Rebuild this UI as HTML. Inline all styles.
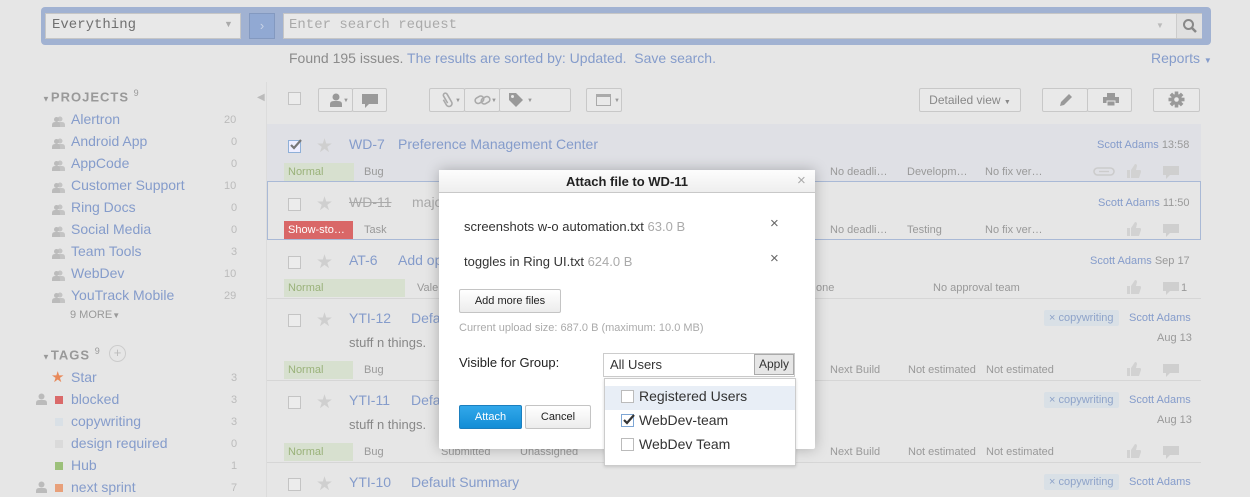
<!DOCTYPE html>
<html><head><meta charset="utf-8"><style>
*{box-sizing:border-box;margin:0;padding:0}
body{width:1250px;height:497px;overflow:hidden;background:#e6e6e6;font-family:"Liberation Sans",sans-serif;font-size:13px;color:#8a8a8a;position:relative}
.a{position:absolute;white-space:nowrap}
.lk{color:#859ccb}
.cb{position:absolute;width:13px;height:13px;border:1px solid #c4c4c4;background:#ececec}
.star{position:absolute;color:#cfcfcf;font-size:19px}
.btn{position:absolute;border:1px solid #c8c8c8;border-radius:2px;background:#e9e9e9;height:24px}
.tag{position:absolute;background:#d9e0e6;color:#8ea3c9;font-size:11px;padding:2px 5px;border-radius:2px}
.sep{position:absolute;left:267px;width:934px;height:1px;background:#d6d6d6}
</style></head><body>
<div class="a" style="left:41px;top:7px;width:1170px;height:38px;background:#a1b2d2;border-radius:4px"></div>
<div class="a" style="left:45px;top:13px;width:196px;height:26px;background:#e8e8e8;border:1px solid #c6c6c6"></div>
<div class="a" style="left:52px;top:17px;font-family:'Liberation Mono',monospace;font-size:14px;color:#707070">Everything</div>
<div class="a" style="left:224px;top:19px;color:#aaa;font-size:9px">▼</div>
<div class="a" style="left:249px;top:13px;width:26px;height:26px;background:#91a9d3;border:1px solid #8399c0;color:#c8d3e6;text-align:center;line-height:24px">›</div>
<div class="a" style="left:283px;top:13px;width:919px;height:26px;background:#e8e8e8;border:1px solid #c6c6c6"></div>
<div class="a" style="left:289px;top:17px;font-family:'Liberation Mono',monospace;font-size:14px;color:#aaa">Enter search request</div>
<div class="a" style="left:1156px;top:21px;color:#bbb;font-size:8px">▼</div>
<div class="a" style="left:1176px;top:14px;width:26px;height:24px;background:#e0e0e0;border-left:1px solid #ccc"></div>
<svg class="a" style="left:1182px;top:18px" width="16" height="16"><circle cx="6.5" cy="6.5" r="4.5" fill="none" stroke="#888" stroke-width="2"/><path d="M10 10l4 4" stroke="#888" stroke-width="2.5"/></svg>
<div class="a" style="left:289px;top:50px;font-size:14px;color:#8b8b8b">Found 195 issues. <span class="lk">The results are sorted by: Updated.&nbsp; Save search.</span></div>
<div class="a lk" style="left:1151px;top:50px;font-size:14px">Reports <span style="font-size:8px">▼</span></div>
<div class="a" style="left:42px;top:88px;font-size:13px;color:#999;letter-spacing:1px;font-weight:bold"><span style="font-size:8px">▼</span>PROJECTS <sup style="font-size:9px;font-weight:normal">9</sup></div>
<div class="a" style="left:257px;top:92px;color:#bbb;font-size:10px">◀</div>
<div class="a" style="left:266px;top:82px;width:1px;height:415px;background:#dcdcdc"></div>
<div id="proj"></div>
<div class="a" style="left:70px;top:309px;font-size:11px;color:#999">9 MORE<span style="font-size:8px">▼</span></div>
<div class="a" style="left:42px;top:346px;font-size:13px;color:#999;letter-spacing:1px;font-weight:bold"><span style="font-size:8px">▼</span>TAGS <sup style="font-size:9px;font-weight:normal">9</sup></div>
<div class="a" style="left:109px;top:345px;width:17px;height:17px;border:1px solid #ccc;border-radius:50%;color:#bbb;text-align:center;line-height:14px">+</div>
<div class="cb" style="left:288px;top:92px"></div>
<div class="btn" style="left:318px;top:88px;width:35px"></div><div class="btn" style="left:352px;top:88px;width:35px"></div>
<svg class="a" style="left:330px;top:93px" width="12" height="14"><circle cx="6" cy="4" r="3.5" fill="#999"/><path d="M0 14v-3q0-3 4-3h4q4 0 4 3v3z" fill="#999"/></svg>
<div class="a" style="left:343px;top:98px;color:#999;font-size:6px">▼</div>
<svg class="a" style="left:361px;top:93px" width="18" height="16"><path d="M1 1h16v10H8l-4 4v-4H1z" fill="#9a9a9a"/></svg>
<div class="btn" style="left:429px;top:88px;width:36px"></div><div class="btn" style="left:464px;top:88px;width:36px"></div><div class="btn" style="left:499px;top:88px;width:72px"></div>
<svg class="a" style="left:441px;top:92px" width="12" height="16"><path d="M3 6v6a3 3 0 006 0V3a2 2 0 00-4 0v8" fill="none" stroke="#aaa" stroke-width="1.6" transform="rotate(-30 6 8)"/></svg>
<div class="a" style="left:455px;top:98px;color:#999;font-size:6px">▼</div>
<svg class="a" style="left:474px;top:93px" width="18" height="14"><rect x="1" y="4" width="9" height="6" rx="3" fill="none" stroke="#aaa" stroke-width="1.6" transform="rotate(-30 5 7)"/><rect x="7" y="4" width="9" height="6" rx="3" fill="none" stroke="#aaa" stroke-width="1.6" transform="rotate(-30 12 7)"/></svg>
<div class="a" style="left:491px;top:98px;color:#999;font-size:6px">▼</div>
<svg class="a" style="left:508px;top:92px" width="16" height="16"><path d="M1 1h7l7 7-7 7-7-7z" fill="#999"/><circle cx="4.5" cy="4.5" r="1.5" fill="#e9e9e9"/></svg>
<div class="a" style="left:527px;top:98px;color:#999;font-size:6px">▼</div>
<div class="btn" style="left:586px;top:88px;width:36px"></div>
<div class="a" style="left:596px;top:94px;width:15px;height:12px;border:1px solid #aaa;border-top-width:3px"></div>
<div class="a" style="left:614px;top:98px;color:#999;font-size:6px">▼</div>
<div class="btn" style="left:919px;top:88px;width:102px;text-align:center;line-height:22px;font-size:12px;color:#888">Detailed view <span style="font-size:7px">▼</span></div>
<div class="btn" style="left:1042px;top:88px;width:46px"></div><div class="btn" style="left:1087px;top:88px;width:45px"></div>
<svg class="a" style="left:1058px;top:92px" width="16" height="16"><path d="M2 14l1-4 8-8 3 3-8 8z" fill="#999"/></svg>
<svg class="a" style="left:1103px;top:93px" width="16" height="14"><rect x="4" y="0" width="8" height="4" fill="#999"/><rect x="0" y="4" width="16" height="6" fill="#999"/><rect x="4" y="8" width="8" height="5" fill="#999" stroke="#e9e9e9" stroke-width="1"/></svg>
<div class="btn" style="left:1153px;top:88px;width:47px"></div>
<svg class="a" style="left:1168px;top:91px" width="17" height="17" viewBox="-8.5 -8.5 17 17"><g fill="#999"><circle r="5.5"/><rect x="-1.8" y="-8" width="3.6" height="16"/><rect x="-1.8" y="-8" width="3.6" height="16" transform="rotate(45)"/><rect x="-1.8" y="-8" width="3.6" height="16" transform="rotate(90)"/><rect x="-1.8" y="-8" width="3.6" height="16" transform="rotate(135)"/></g><circle r="2.3" fill="#e9e9e9"/></svg>
<div class="a" style="left:267px;top:124px;width:934px;height:58px;background:#dfe0e5"></div>
<div class="a" style="left:267px;top:181px;width:934px;height:59px;border:1px solid #a9b9d6"></div>
<div class="sep" style="top:298px"></div><div class="sep" style="top:380px"></div><div class="sep" style="top:462px"></div>
<div id="rows"></div>
<div class="a" style="left:439px;top:170px;width:376px;height:279px;background:#fff;border-radius:2px;box-shadow:0 0 14px rgba(0,0,0,.25)"></div>
<div class="a" style="left:439px;top:170px;width:376px;height:23px;background:linear-gradient(#fdfdfd,#eee);border-bottom:1px solid #c8c8c8;text-align:center;font-weight:bold;font-size:13px;color:#222;line-height:23px">Attach file to WD-11</div>
<div class="a" style="left:797px;top:172px;color:#aaa;font-size:15px">×</div>
<div class="a" style="left:464px;top:219px;font-size:13px;color:#333">screenshots w-o automation.txt <span style="color:#aaa">63.0 B</span></div>
<div class="a" style="left:770px;top:215px;color:#666;font-size:15px">×</div>
<div class="a" style="left:464px;top:254px;font-size:13px;color:#333">toggles in Ring UI.txt <span style="color:#aaa">624.0 B</span></div>
<div class="a" style="left:770px;top:250px;color:#666;font-size:15px">×</div>
<div class="a" style="left:459px;top:289px;width:102px;height:24px;border:1px solid #c4c4c4;border-radius:2px;background:linear-gradient(#fff,#ececec);text-align:center;line-height:22px;font-size:11px;color:#222">Add more files</div>
<div class="a" style="left:459px;top:322px;font-size:11px;color:#aaa">Current upload size: 687.0 B (maximum: 10.0 MB)</div>
<div class="a" style="left:459px;top:355px;font-size:13px;color:#222">Visible for Group:</div>
<div class="a" style="left:603px;top:353px;width:192px;height:24px;border:1px solid #ccc;background:#fff"></div>
<div class="a" style="left:610px;top:357px;font-size:13px;color:#333">All Users</div>
<div class="a" style="left:754px;top:354px;width:40px;height:21px;background:#e6e6e6;border:1px solid #aaa;text-align:center;line-height:19px;font-size:12px;color:#333">Apply</div>
<div class="a" style="left:459px;top:405px;width:63px;height:24px;background:linear-gradient(#32a8ea,#128dd6);border:1px solid #1b7fbf;border-radius:2px;color:#fff;text-align:center;line-height:22px;font-size:11px">Attach</div>
<div class="a" style="left:525px;top:405px;width:66px;height:24px;border:1px solid #c4c4c4;border-radius:2px;background:linear-gradient(#fff,#ececec);color:#222;text-align:center;line-height:22px;font-size:11px">Cancel</div>
<div class="a" style="left:604px;top:378px;width:192px;height:88px;background:#fff;border:1px solid #ccc;box-shadow:0 1px 3px rgba(0,0,0,.15)"></div>
<div class="a" style="left:605px;top:386px;width:190px;height:24px;background:#e8eef6"></div>
<div class="a" style="left:621px;top:390px;width:13px;height:13px;border:1px solid #bbb;background:#fff"></div>
<div class="a" style="left:639px;top:388px;font-size:14px;color:#333">Registered Users</div>
<div class="a" style="left:621px;top:414px;width:13px;height:13px;border:1px solid #7ea6d4;background:#fff"></div>
<svg class="a" style="left:622px;top:414px" width="13" height="12"><path d="M2 6l3 3 7-8" fill="none" stroke="#333" stroke-width="2.2"/></svg>
<div class="a" style="left:639px;top:412px;font-size:14px;color:#333">WebDev-team</div>
<div class="a" style="left:621px;top:438px;width:13px;height:13px;border:1px solid #bbb;background:#fff"></div>
<div class="a" style="left:639px;top:436px;font-size:14px;color:#333">WebDev Team</div>
<script>
var PPL='<svg width="13" height="11"><circle cx="8" cy="3" r="2.5" fill="#c4c4c4"/><path d="M3 11v-2q0-3 3-3h4q3 0 3 3v2z" fill="#c4c4c4"/><circle cx="4.5" cy="3.5" r="2.5" fill="#bbb"/><path d="M0 11v-2q0-3 3-3h3q2 0 2 3v2z" fill="#bbb"/></svg>';
var ME='<svg width="11" height="12"><circle cx="5.5" cy="3.5" r="3" fill="#bbb"/><path d="M0 12v-2q0-3 3-3h5q3 0 3 3v2z" fill="#bbb"/></svg>';
var P=[["Alertron",20],["Android App",0],["AppCode",0],["Customer Support",10],["Ring Docs",0],["Social Media",0],["Team Tools",3],["WebDev",10],["YouTrack Mobile",29]],h="";
P.forEach(function(p,i){var y=111+i*22;h+='<div class="a" style="left:52px;top:'+(y+4)+'px">'+PPL+'</div><div class="a lk" style="left:71px;top:'+y+'px;font-size:14px">'+p[0]+'</div><div class="a" style="left:'+(p[1]>9?224:231)+'px;top:'+(y+3)+'px;font-size:11px;color:#bbb">'+p[1]+'</div>';});
var T=[["Star","",3],["blocked","#da6a6a",3],["copywriting","#d9e0e6",3],["design required","#dadada",0],["Hub","#9cc07a",1],["next sprint","#e8a07a",7]];
T.forEach(function(t,i){var y=369+i*22;h+=(i==0?'<div class="a" style="left:51px;top:'+(y-1)+'px;color:#e8895a;font-size:15px">★</div>':'<div class="a" style="left:55px;top:'+(y+5)+'px;width:8px;height:8px;background:'+t[1]+'"></div>')+((i==1||i==5)?'<div class="a" style="left:36px;top:'+(y+2)+'px">'+ME+'</div>':'')+'<div class="a lk" style="left:71px;top:'+y+'px;font-size:14px">'+t[0]+'</div><div class="a" style="left:231px;top:'+(y+3)+'px;font-size:11px;color:#bbb">'+t[2]+'</div>';});
document.getElementById("proj").innerHTML=h;
var r="";
function row(y,id,title,strike,chk){r+='<div class="cb" style="left:288px;top:'+(y+6)+'px'+(chk?';border-color:#8fb0d8;background:#eef':'')+'"></div>'+(chk?'<svg class="a" style="left:289px;top:'+(y+5)+'px" width="13" height="12"><path d="M2 6l3 3 7-8" fill="none" stroke="#777" stroke-width="2.2"/></svg>':'')+'<div class="star" style="left:316px;top:'+(y+1)+'px">★</div><div class="a lk" style="left:349px;top:'+(y+2)+'px;font-size:14px'+(strike?';text-decoration:line-through;color:#aaa':'')+'">'+id+'</div><div class="a lk" style="left:'+(id.length>5?411:id.length>4?412:398)+'px;top:'+(y+2)+'px;font-size:14px'+(strike?';color:#aaa':'')+'">'+title+'</div>';}
function pri(y,t,bg,c,w){r+='<div class="a" style="left:284px;top:'+y+'px;width:'+w+'px;height:18px;background:'+bg+';color:'+c+';font-size:11px;padding:3px 4px">'+t+'</div>';}
function t(x,y,s,c){r+='<div class="a" style="left:'+x+'px;top:'+y+'px;font-size:11px;color:'+(c||'#999')+'">'+s+'</div>';}
function icons(y,n){r+='<svg class="a" style="left:1127px;top:'+y+'px" width="14" height="14"><rect x="0" y="6" width="3" height="8" fill="#d2d2d2"/><path d="M4 6l4-6q2 0 2 2l-1 4h4q1 0 1 2l-2 6H4z" fill="#d2d2d2"/></svg><svg class="a" style="left:1162px;top:'+(y+1)+'px" width="18" height="15"><path d="M1 1h16v9H8l-4 4v-4H1z" fill="#cfcfcf"/></svg>'+(n?'<div class="a" style="left:1181px;top:'+(y+2)+'px;font-size:11px;color:#999">1</div>':'');}
row(134,"WD-7","Preference Management Center",0,1);pri(163,"Normal","#d7e0cf","#9ab27a",70);t(364,166,"Bug");t(830,166,"No deadli…");t(907,166,"Developm…");t(985,166,"No fix ver…");icons(164);
r+='<svg class="a" style="left:1093px;top:167px" width="22" height="9"><rect x="1" y="1" width="20" height="7" rx="3.5" fill="none" stroke="#ccc" stroke-width="1.6"/><path d="M6 4.5h10" stroke="#ccc" stroke-width="1.4"/></svg>';
r+='<div class="a lk" style="left:1097px;top:139px;font-size:11px">Scott Adams <span style="color:#999">13:58</span></div>';
row(192,"WD-11","majo",1);pri(221,"Show-sto…","#d96767","#fff",69);t(364,224,"Task");t(830,224,"No deadli…");t(907,224,"Testing");t(985,224,"No fix ver…");icons(222);
r+='<div class="a lk" style="left:1098px;top:197px;font-size:11px">Scott Adams <span style="color:#999">11:50</span></div>';
row(250,"AT-6","Add op");pri(279,"Normal","#d7e0cf","#9ab27a",121);t(417,282,"Vale");t(816,282,"one");t(933,282,"No approval team");icons(280,1);
r+='<div class="a lk" style="left:1090px;top:255px;font-size:11px">Scott Adams <span style="color:#999">Sep 17</span></div>';
[[308,"YTI-12"],[390,"YTI-11"]].forEach(function(a){var y=a[0];row(y,a[1],"Defa");r+='<div class="a" style="left:349px;top:'+(y+27)+'px;font-size:13px;color:#888">stuff n things.</div>';pri(y+53,"Normal","#d7e0cf","#9ab27a",69);t(364,y+56,"Bug");t(830,y+56,"Next Build");t(908,y+56,"Not estimated");t(986,y+56,"Not estimated");icons(y+54);r+='<div class="tag" style="left:1044px;top:'+(y+2)+'px">× copywriting</div><div class="a lk" style="left:1129px;top:'+(y+4)+'px;font-size:11px">Scott Adams</div><div class="a" style="left:1157px;top:'+(y+24)+'px;font-size:11px;color:#999">Aug 13</div>';});
t(441,446,"Submitted");t(520,446,"Unassigned");
row(472,"YTI-10","Default Summary");r+='<div class="tag" style="left:1044px;top:474px">× copywriting</div><div class="a lk" style="left:1129px;top:476px;font-size:11px">Scott Adams</div>';
document.getElementById("rows").innerHTML=r;
</script>
</body></html>
